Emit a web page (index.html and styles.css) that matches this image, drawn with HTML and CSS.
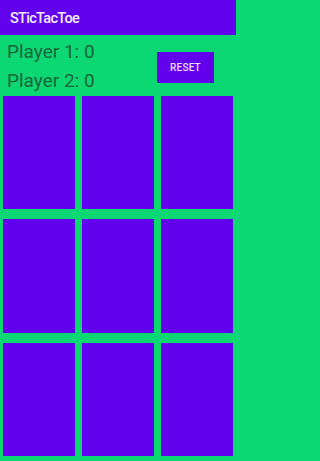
FILE: index.html
```html
<!DOCTYPE html>
<html>
<head>
<meta charset="utf-8">
<link rel="stylesheet" href="styles.css">
</head>
<body>
<header class="appbar"><span class="title">STicTacToe</span></header>
<main class="content">
  <section class="scores">
    <div class="players">
      <div class="player">Player 1: 0</div>
      <div class="player">Player 2: 0</div>
    </div>
    <button class="reset">RESET</button>
  </section>
  <section class="board">
    <button class="cell"></button>
    <button class="cell"></button>
    <button class="cell"></button>
    <button class="cell"></button>
    <button class="cell"></button>
    <button class="cell"></button>
    <button class="cell"></button>
    <button class="cell"></button>
    <button class="cell"></button>
  </section>
</main>
</body>
</html>
```
FILE: styles.css
```css
html, body {
  margin: 0;
  padding: 0;
  height: 100%;
}
body {
  font-family: Roboto, "Noto Sans", sans-serif;
  background: #0cd873;
  display: flex;
  flex-direction: column;
  width: 236px;
  height: 461px;
  overflow: hidden;
}
.appbar {
  height: 35px;
  background: #6200ee;
  display: flex;
  align-items: center;
  padding-left: 10px;
  flex-shrink: 0;
}
.title {
  color: #f3ecff;
  font-size: 14.5px;
  font-weight: 500;
  letter-spacing: -0.7px;
  padding-top: 2px;
}
.content {
  flex: 1;
  display: flex;
  flex-direction: column;
}
.scores {
  display: flex;
  align-items: center;
  justify-content: space-between;
  height: 61px;
  padding: 0 22px 0 7px;
}
.players {
  display: flex;
  flex-direction: column;
  padding-top: 1px;
}
.player {
  font-size: 19px;
  line-height: 29px;
  color: #17663a;
}
.reset {
  width: 57px;
  height: 31px;
  border: none;
  background: #6200ee;
  color: #eadcff;
  font-family: Roboto, "Noto Sans", sans-serif;
  font-size: 10px;
  font-weight: 500;
  letter-spacing: 0.2px;
  padding: 0;
  margin-top: 3px;
}
.board {
  flex: 1;
  display: grid;
  grid-template-columns: 1fr 1fr 1fr;
  grid-template-rows: 1fr 1fr 1fr;
  column-gap: 7px;
  row-gap: 10px;
  padding: 0 3px 5px 3px;
}
.cell {
  background: #6200ee;
  border: none;
  padding: 0;
  margin: 0;
}
```
